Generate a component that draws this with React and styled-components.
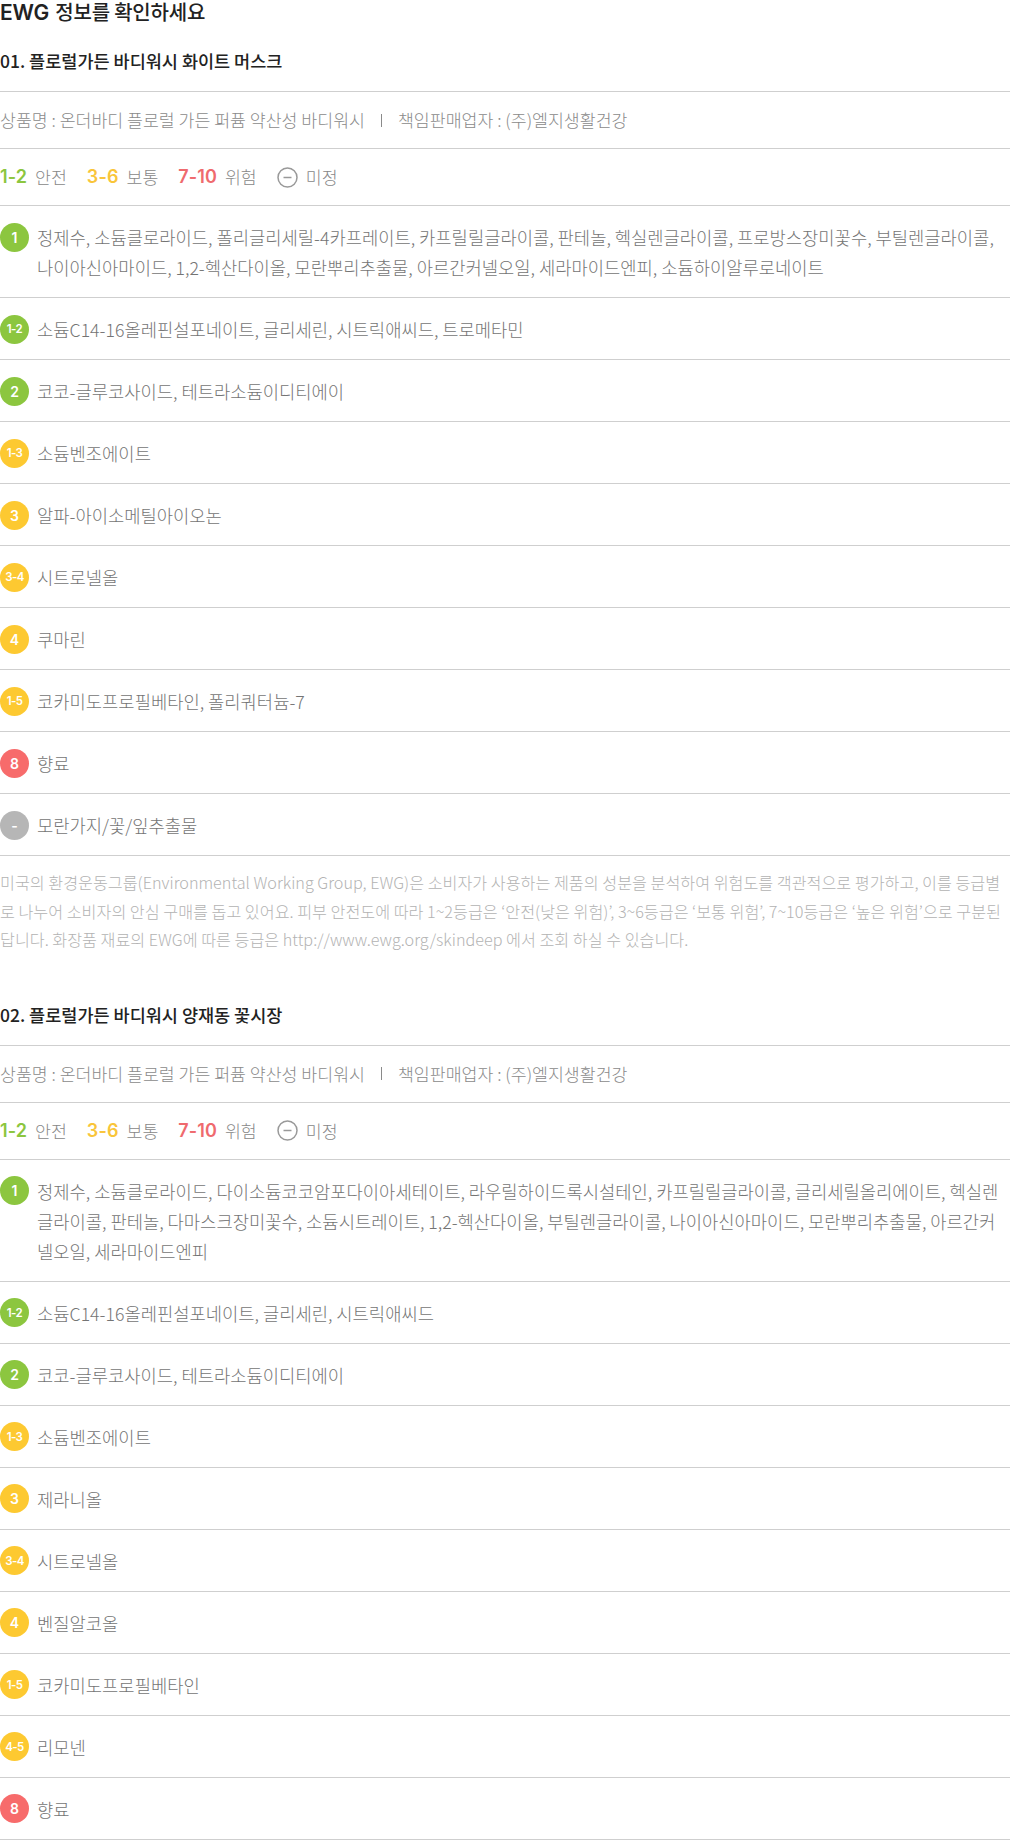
import React from 'react';
import styled, { createGlobalStyle } from 'styled-components';

const GlobalStyle = createGlobalStyle`
  html, body { margin: 0; padding: 0; background: #fff; }
  body { font-family: "Noto Sans CJK KR", "Noto Sans", sans-serif; -webkit-font-smoothing: antialiased; }
  * { box-sizing: border-box; }
`;

const COLORS = {
  green: '#8cc63f',
  yellow: '#fdc931',
  red: '#f76b6b',
  gray: '#b6b6b6',
};

const Page = styled.div`
  width: 1010px;
`;

const PageTitle = styled.h2`
  margin: 0;
  font-size: 20px;
  line-height: 24px;
  font-weight: 500;
  color: #222;
  letter-spacing: -0.2px;
`;

const Latin = styled.span`
  font-family: Inter, "Noto Sans", sans-serif;
  font-weight: 600;
  font-size: 21px;
  margin-right: 2px;
`;

const Section = styled.section`
  margin-top: ${(p) => p.$top}px;
`;

const ProductTitle = styled.h3`
  margin: 0;
  padding-bottom: 18px;
  font-size: 17.5px;
  line-height: 24px;
  font-weight: 500;
  color: #222;
  border-bottom: 1px solid #cfcfcf;
`;

const InfoRow = styled.div`
  display: flex;
  align-items: center;
  padding: 13px 0;
  line-height: 30px;
  font-size: 17.3px;
  font-weight: 300;
  color: #8a8a8a;
  border-bottom: 1px solid #cfcfcf;
`;

const Sep = styled.span`
  display: inline-block;
  width: 1px;
  height: 13px;
  background: #8a8a8a;
  margin: 0 16px;
`;

const Legend = styled(InfoRow)``;

const LegendItem = styled.span`
  display: inline-flex;
  align-items: center;
  margin-right: 20px;
  color: #888;
  font-size: 17.3px;
`;

const LegendNum = styled.span`
  font-family: Inter, "Noto Sans", sans-serif;
  font-weight: 600;
  font-size: 18px;
  color: ${(p) => p.$color};
  margin-right: 8px;
  letter-spacing: 0.1px;
`;

const NoneIcon = styled.svg`
  width: 21px;
  height: 21px;
  margin-right: 8px;
`;

const IngredientRow = styled.div`
  display: flex;
  align-items: flex-start;
  padding: 16px 0 15px;
  border-bottom: 1px solid #cfcfcf;
`;

const Badge = styled.span`
  flex: none;
  width: 29px;
  height: 29px;
  margin-top: 0.5px;
  margin-right: 8px;
  border-radius: 50%;
  background: ${(p) => COLORS[p.$tone]};
  color: #fff;
  display: flex;
  align-items: center;
  justify-content: center;
  font-family: Inter, "Noto Sans", sans-serif;
  font-weight: 600;
  font-size: ${(p) => (p.$small ? '11.5px' : '14px')};
  letter-spacing: ${(p) => (p.$small ? '-0.6px' : '0')};
`;

const IngredientText = styled.p`
  margin: 0;
  flex: 1;
  font-size: 17.7px;
  line-height: 30px;
  font-weight: 300;
  color: #747474;
`;

const Description = styled.p`
  margin: 0;
  padding-top: 12px;
  font-size: 16.2px;
  line-height: 28.5px;
  font-weight: 300;
  color: #b3b3b3;
`;

const products = [
  {
    title: '01. 플로럴가든 바디워시 화이트 머스크',
    items: [
      ['1', 'green', '정제수, 소듐클로라이드, 폴리글리세릴-4카프레이트, 카프릴릴글라이콜, 판테놀, 헥실렌글라이콜, 프로방스장미꽃수, 부틸렌글라이콜, 나이아신아마이드, 1,2-헥산다이올, 모란뿌리추출물, 아르간커넬오일, 세라마이드엔피, 소듐하이알루로네이트'],
      ['1-2', 'green', '소듐C14-16올레핀설포네이트, 글리세린, 시트릭애씨드, 트로메타민'],
      ['2', 'green', '코코-글루코사이드, 테트라소듐이디티에이'],
      ['1-3', 'yellow', '소듐벤조에이트'],
      ['3', 'yellow', '알파-아이소메틸아이오논'],
      ['3-4', 'yellow', '시트로넬올'],
      ['4', 'yellow', '쿠마린'],
      ['1-5', 'yellow', '코카미도프로필베타인, 폴리쿼터늄-7'],
      ['8', 'red', '향료'],
      ['-', 'gray', '모란가지/꽃/잎추출물'],
    ],
    desc: true,
  },
  {
    title: '02. 플로럴가든 바디워시 양재동 꽃시장',
    items: [
      ['1', 'green', '정제수, 소듐클로라이드, 다이소듐코코암포다이아세테이트, 라우릴하이드록시설테인, 카프릴릴글라이콜, 글리세릴올리에이트, 헥실렌글라이콜, 판테놀, 다마스크장미꽃수, 소듐시트레이트, 1,2-헥산다이올, 부틸렌글라이콜, 나이아신아마이드, 모란뿌리추출물, 아르간커넬오일, 세라마이드엔피'],
      ['1-2', 'green', '소듐C14-16올레핀설포네이트, 글리세린, 시트릭애씨드'],
      ['2', 'green', '코코-글루코사이드, 테트라소듐이디티에이'],
      ['1-3', 'yellow', '소듐벤조에이트'],
      ['3', 'yellow', '제라니올'],
      ['3-4', 'yellow', '시트로넬올'],
      ['4', 'yellow', '벤질알코올'],
      ['1-5', 'yellow', '코카미도프로필베타인'],
      ['4-5', 'yellow', '리모넨'],
      ['8', 'red', '향료'],
    ],
    desc: false,
  },
];

function LegendBar() {
  return (
    <Legend>
      <LegendItem><LegendNum $color={COLORS.green}>1-2</LegendNum>안전</LegendItem>
      <LegendItem><LegendNum $color="#f9c53a">3-6</LegendNum>보통</LegendItem>
      <LegendItem><LegendNum $color="#ef6a6e">7-10</LegendNum>위험</LegendItem>
      <LegendItem>
        <NoneIcon viewBox="0 0 21 21">
          <circle cx="10.5" cy="10.5" r="9.5" fill="none" stroke="#999" strokeWidth="1.5" />
          <line x1="6.5" y1="10.5" x2="14.5" y2="10.5" stroke="#999" strokeWidth="1.5" />
        </NoneIcon>
        미정
      </LegendItem>
    </Legend>
  );
}

function Product({ data, top }) {
  return (
    <Section $top={top}>
      <ProductTitle>{data.title}</ProductTitle>
      <InfoRow>
        상품명 : 온더바디 플로럴 가든 퍼퓸 약산성 바디워시<Sep />책임판매업자 : (주)엘지생활건강
      </InfoRow>
      <LegendBar />
      {data.items.map(([g, tone, text], i) => (
        <IngredientRow key={i}>
          <Badge $tone={tone} $small={g.length > 1}>{g}</Badge>
          <IngredientText>{text}</IngredientText>
        </IngredientRow>
      ))}
      {data.desc && (
        <Description>
          미국의 환경운동그룹(Environmental Working Group, EWG)은 소비자가 사용하는 제품의 성분을 분석하여 위험도를 객관적으로 평가하고, 이를 등급별로 나누어 소비자의 안심 구매를 돕고 있어요. 피부 안전도에 따라 1~2등급은 ‘안전(낮은 위험)’, 3~6등급은 ‘보통 위험’, 7~10등급은 ‘높은 위험’으로 구분된답니다. 화장품 재료의 EWG에 따른 등급은 http://www.ewg.org/skindeep 에서 조회 하실 수 있습니다.
        </Description>
      )}
    </Section>
  );
}

export default function App() {
  return (
    <Page>
      <GlobalStyle />
      <PageTitle><Latin>EWG</Latin> 정보를 확인하세요</PageTitle>
      <Product data={products[0]} top={24} />
      <Product data={products[1]} top={49} />
    </Page>
  );
}
